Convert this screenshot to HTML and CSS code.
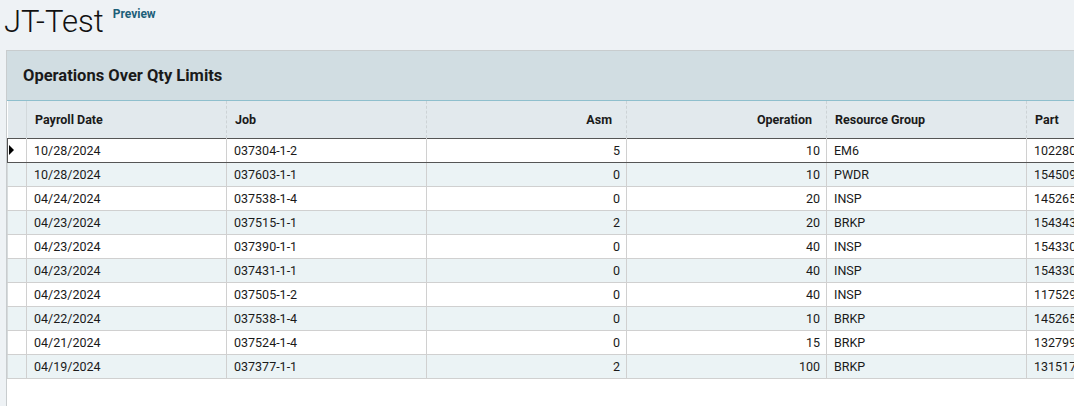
FILE: index.html
```html
<!DOCTYPE html>
<html lang="en">
<head>
    <meta charset="UTF-8">
    <title>JT-Test</title>
    <link rel="stylesheet" href="styles.css">
</head>
<body>

<div class="pageHeader">
    <h1 class="pageTitle">JT-Test</h1>
    <span class="previewTag">Preview</span>
</div>

<div class="panel">
    <div class="panelHead">Operations Over Qty Limits</div>

    <table class="grid">
        <colgroup>
            <col class="colIndicator">
            <col class="colData">
            <col class="colData">
            <col class="colData">
            <col class="colData">
            <col class="colData">
            <col class="colData">
        </colgroup>
        <thead>
            <tr>
                <th class="rowHead"></th>
                <th>Payroll Date</th>
                <th>Job</th>
                <th class="num">Asm</th>
                <th class="num">Operation</th>
                <th>Resource Group</th>
                <th>Part</th>
            </tr>
        </thead>
        <tbody>
            <tr class="selected">
                <td class="rowHead"><span class="pointer"></span></td>
                <td>10/28/2024</td><td>037304-1-2</td><td class="num">5</td><td class="num">10</td><td>EM6</td><td>102280</td>
            </tr>
            <tr>
                <td class="rowHead"></td>
                <td>10/28/2024</td><td>037603-1-1</td><td class="num">0</td><td class="num">10</td><td>PWDR</td><td>154509</td>
            </tr>
            <tr>
                <td class="rowHead"></td>
                <td>04/24/2024</td><td>037538-1-4</td><td class="num">0</td><td class="num">20</td><td>INSP</td><td>145265</td>
            </tr>
            <tr>
                <td class="rowHead"></td>
                <td>04/23/2024</td><td>037515-1-1</td><td class="num">2</td><td class="num">20</td><td>BRKP</td><td>154343</td>
            </tr>
            <tr>
                <td class="rowHead"></td>
                <td>04/23/2024</td><td>037390-1-1</td><td class="num">0</td><td class="num">40</td><td>INSP</td><td>154330</td>
            </tr>
            <tr>
                <td class="rowHead"></td>
                <td>04/23/2024</td><td>037431-1-1</td><td class="num">0</td><td class="num">40</td><td>INSP</td><td>154330</td>
            </tr>
            <tr>
                <td class="rowHead"></td>
                <td>04/23/2024</td><td>037505-1-2</td><td class="num">0</td><td class="num">40</td><td>INSP</td><td>117529</td>
            </tr>
            <tr>
                <td class="rowHead"></td>
                <td>04/22/2024</td><td>037538-1-4</td><td class="num">0</td><td class="num">10</td><td>BRKP</td><td>145265</td>
            </tr>
            <tr>
                <td class="rowHead"></td>
                <td>04/21/2024</td><td>037524-1-4</td><td class="num">0</td><td class="num">15</td><td>BRKP</td><td>132799</td>
            </tr>
            <tr>
                <td class="rowHead"></td>
                <td>04/19/2024</td><td>037377-1-1</td><td class="num">2</td><td class="num">100</td><td>BRKP</td><td>131517</td>
            </tr>
        </tbody>
    </table>
</div>

</body>
</html>
```

FILE: styles.css
```css
html, body {
    height: 100%;
}

body {
    margin: 0;
    padding: 0;
    background-color: #eef2f5;
    font-family: Roboto, "Liberation Sans", sans-serif;
    color: #1a1a1a;
    overflow: hidden;
}

/* Page title */
.pageHeader {
    display: flex;
    align-items: flex-start;
    height: 50px;
    padding-left: 4px;
    box-sizing: border-box;
}

.pageTitle {
    margin: 0;
    font-size: 31px;
    font-weight: 300;
    line-height: 44px;
    color: #111;
}

.previewTag {
    margin: 7px 0 0 9px;
    font-size: 12px;
    font-weight: 700;
    color: #1c5f79;
}

/* Panel */
.panel {
    margin-left: 6px;
    height: calc(100% - 50px);
    border: 1px solid #c8ccce;
    border-right: none;
    border-bottom: none;
    background-color: #fff;
    overflow: hidden;
    box-sizing: border-box;
}

.panelHead {
    height: 50px;
    padding-left: 16px;
    display: flex;
    align-items: center;
    background-color: #d1dde2;
    border-bottom: 1px solid #8fbfcd;
    font-size: 16.5px;
    font-weight: 700;
    box-sizing: border-box;
}

/* Grid */
.grid {
    table-layout: fixed;
    border-collapse: collapse;
    width: 1219px;
    font-size: 12.5px;
}

.colIndicator {
    width: 19px;
}

.colData {
    width: 200px;
}

.grid th {
    height: 37px;
    padding: 0 8px;
    text-align: left;
    font-weight: 700;
    background-color: #e2e9ed;
    border-left: 1px dashed #cdd3d6;
    box-sizing: border-box;
}

.grid th.num {
    text-align: right;
    padding-right: 14px;
}

.grid th.rowHead {
    border-left: none;
    border-right: 1px solid #d3d9dc;
}

.grid td {
    height: 23px;
    padding: 0 7px;
    border: 1px solid #d0d0d0;
    border-top: none;
    white-space: nowrap;
    overflow: hidden;
}

.grid td.num {
    text-align: right;
    padding-right: 6px;
}

.grid td.rowHead {
    position: relative;
    padding: 0;
    border-left: 1px solid #d6dadc;
}

.grid tbody tr:nth-child(even) td {
    background-color: #ebf3f5;
}

.grid tr.selected td {
    border-top: 1px solid #555;
    border-bottom: 1px solid #555;
}

.grid tr.selected td.rowHead {
    border-left: 1px solid #555;
}

.pointer {
    position: absolute;
    left: 1px;
    top: 6px;
    width: 0;
    height: 0;
    border-top: 5px solid transparent;
    border-bottom: 5px solid transparent;
    border-left: 5px solid #000;
}
```
